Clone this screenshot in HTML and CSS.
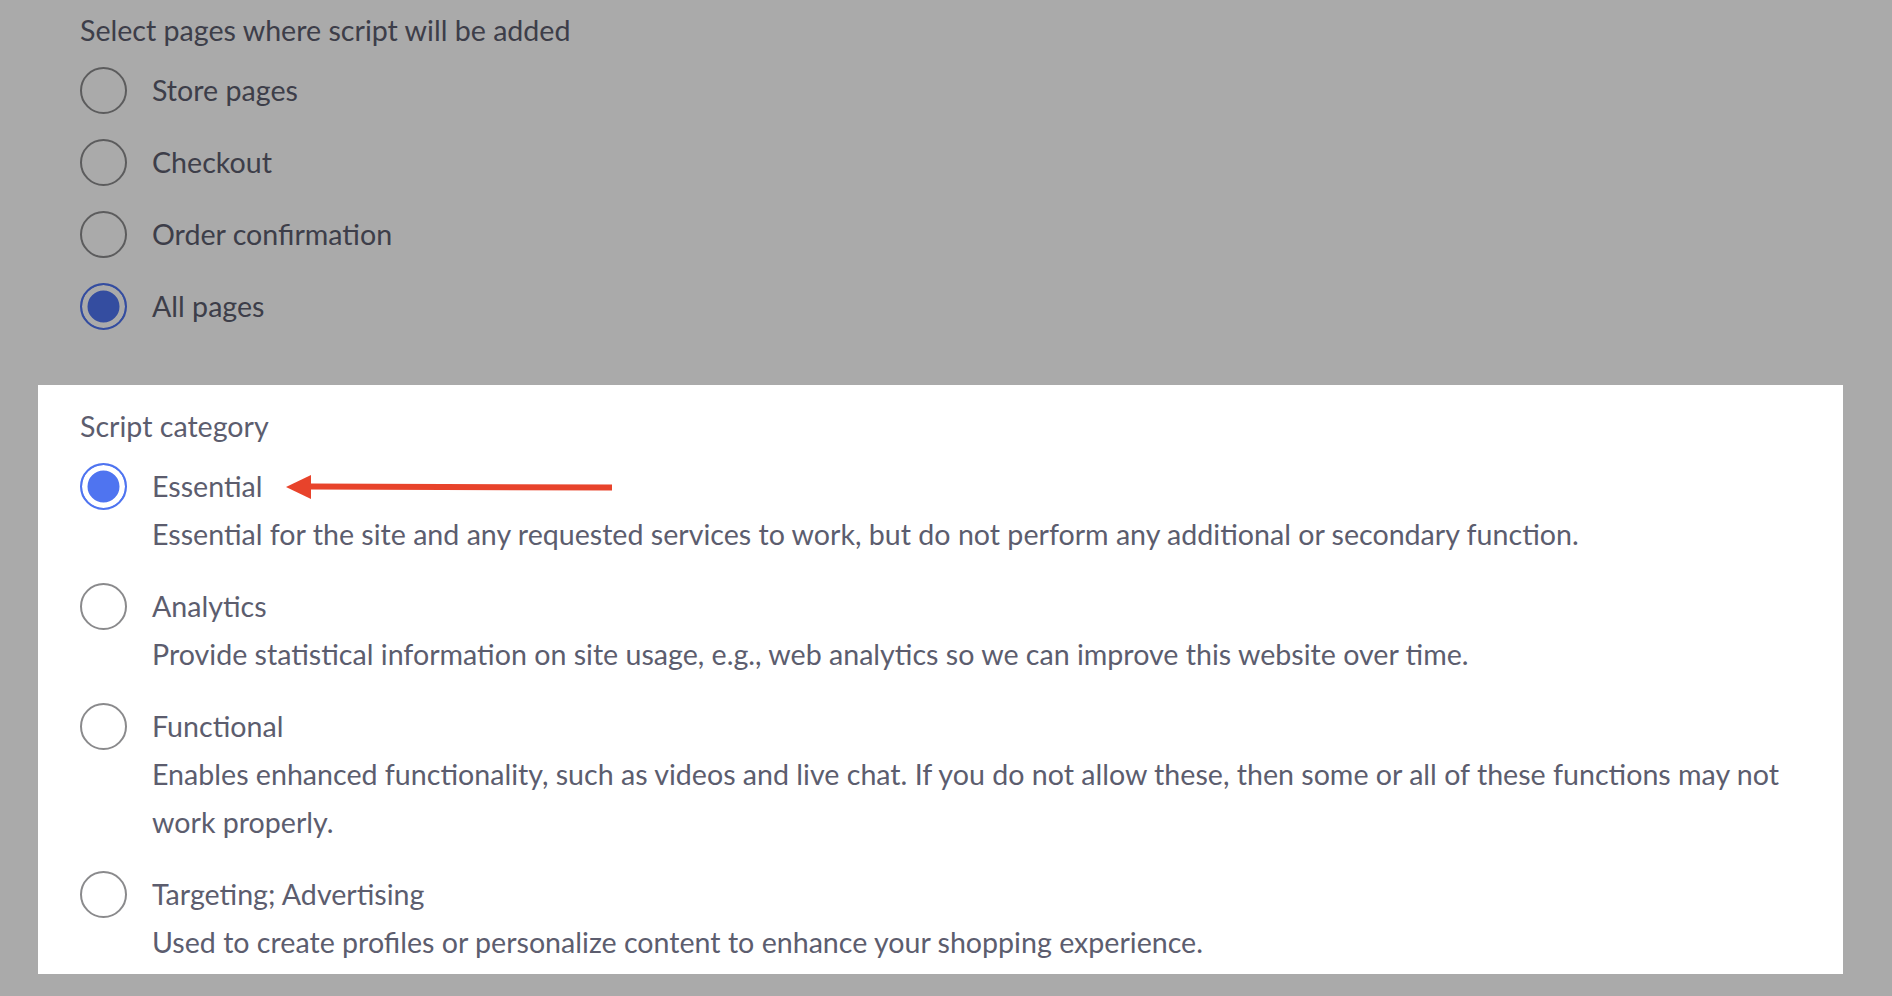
FILE: index.html
```html
<!DOCTYPE html>
<html lang="en">
<head>
<meta charset="utf-8">
<title>Script settings</title>
<link rel="stylesheet" href="styles.css">
</head>
<body>
<section class="pages-section">
  <div class="group-title">Select pages where script will be added</div>
  <div class="options">
    <label class="option"><span class="radio"></span><span class="label">Store pages</span></label>
    <label class="option"><span class="radio"></span><span class="label">Checkout</span></label>
    <label class="option"><span class="radio"></span><span class="label">Order confirmation</span></label>
    <label class="option"><span class="radio checked"></span><span class="label">All pages</span></label>
  </div>
</section>
<section class="panel">
  <div class="group-title">Script category</div>
  <div class="options">
    <div class="cat">
      <label class="option"><span class="radio checked"></span><span class="label">Essential</span></label>
      <p class="desc">Essential for the site and any requested services to work, but do not perform any additional or secondary function.</p>
    </div>
    <div class="cat">
      <label class="option"><span class="radio"></span><span class="label">Analytics</span></label>
      <p class="desc">Provide statistical information on site usage, e.g., web analytics so we can improve this website over time.</p>
    </div>
    <div class="cat">
      <label class="option"><span class="radio"></span><span class="label">Functional</span></label>
      <p class="desc">Enables enhanced functionality, such as videos and live chat. If you do not allow these, then some or all of these functions may not work properly.</p>
    </div>
    <div class="cat">
      <label class="option"><span class="radio"></span><span class="label">Targeting; Advertising</span></label>
      <p class="desc">Used to create profiles or personalize content to enhance your shopping experience.</p>
    </div>
  </div>
  <svg class="arrow" width="340" height="40" viewBox="0 0 340 40" aria-hidden="true">
    <path d="M30 21.5 L332 22.5" stroke="#e8432b" stroke-width="6" fill="none"/>
    <polygon points="6,22 31,10 31,34" fill="#e8432b"/>
  </svg>
</section>
</body>
</html>
```
FILE: styles.css
```css
html, body {
  margin: 0;
  padding: 0;
}
body {
  background: #ffffff;
  font-family: "Lato", "Open Sans", "Liberation Sans", sans-serif;
  font-size: 28.6px;
  color: #5c5d6e;
  overflow: hidden;
  height: 996px;
}
.pages-section {
  padding: 7px 80px 0;
}
.group-title {
  line-height: 47px;
  height: 47px;
  margin-bottom: 13px;
}
.options {
  display: flex;
  flex-direction: column;
  gap: 25px;
}
.option {
  display: flex;
  align-items: center;
  gap: 25px;
  height: 47px;
  line-height: 47px;
}
.radio {
  box-sizing: border-box;
  width: 47px;
  height: 47px;
  border-radius: 50%;
  border: 2px solid #8a8a8c;
  background: #ffffff;
  flex: none;
}
.radio.checked {
  border-color: #4f74f0;
  background: #4f74f0;
  box-shadow: inset 0 0 0 5.5px #ffffff;
}
.panel {
  position: relative;
  background: #ffffff;
  margin: 55px 49px 0 38px;
  padding: 18px 42px 8px;
  box-shadow: 0 0 0 3000px rgba(0, 0, 0, 0.333);
}
.desc {
  margin: 0 0 0 72px;
  line-height: 48px;
  padding-right: 10px;
}
.arrow {
  position: absolute;
  left: 242px;
  top: 80px;
}
```
